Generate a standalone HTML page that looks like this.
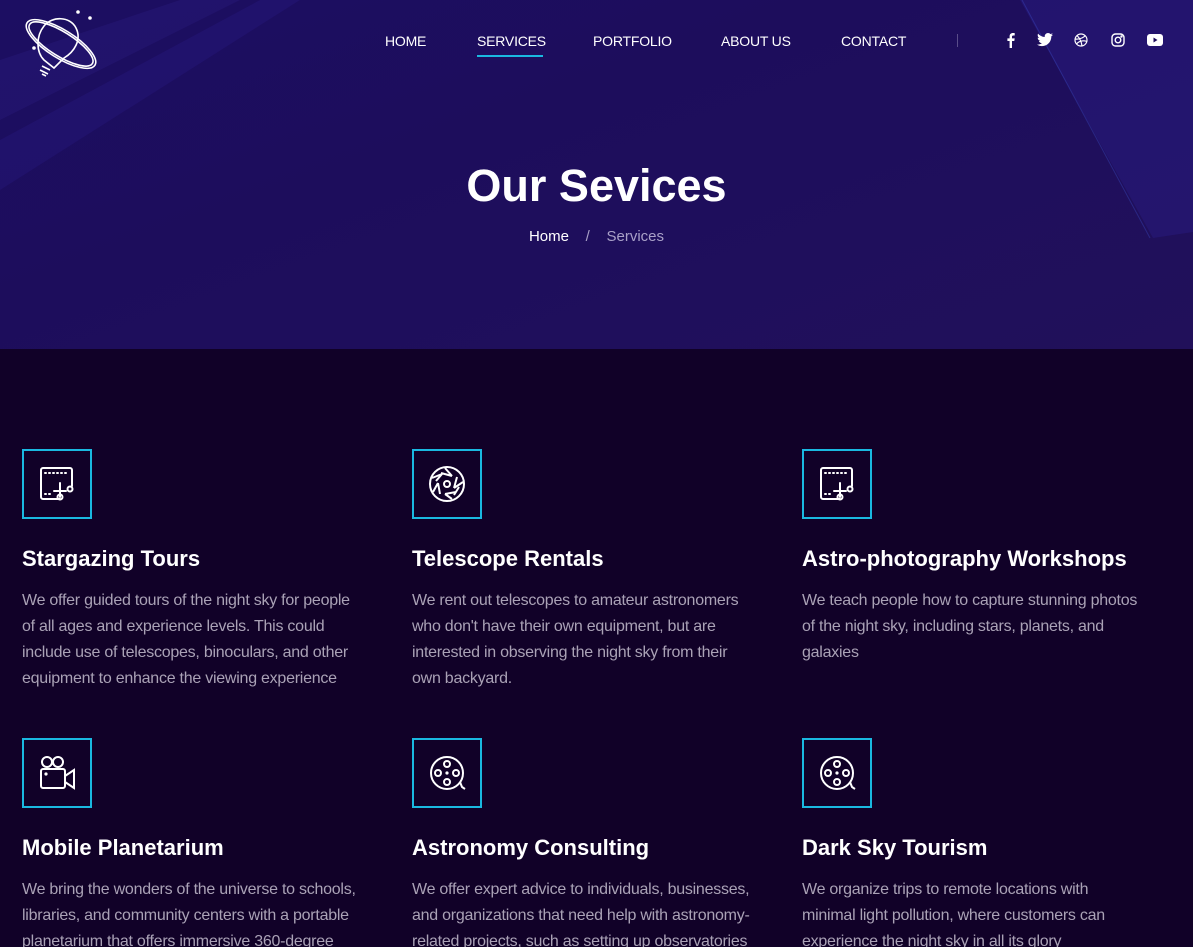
<!DOCTYPE html>
<html><head><meta charset="utf-8"><style>
*{margin:0;padding:0;box-sizing:border-box}
html,body{width:1193px;height:947px;overflow:hidden}
body{background:#110128;font-family:"Liberation Sans",sans-serif;position:relative}
.hero{position:absolute;left:0;top:0;width:1193px;height:349px;background:linear-gradient(160deg,#1c0e62 0%,#1d0d5c 40%,#1f0f5c 70%,#21105a 100%);overflow:hidden}
.nav a{position:absolute;top:33px;color:#fff;font-size:14px;text-decoration:none;letter-spacing:-0.2px}
.sep{position:absolute;left:957px;top:34px;width:1px;height:13px;background:#5a4d8a}
.soc{position:absolute;top:32px}
h1{position:absolute;top:160px;left:0;width:1193px;text-align:center;color:#fff;font-size:45px;font-weight:bold;letter-spacing:0}
.bc{position:absolute;top:228px;left:0;width:1193px;text-align:center;color:#fff;font-size:15px}
.bc span{color:#a9a0c8}
.card{position:absolute;width:380px}
.ib{width:70px;height:70px;border:2px solid #1ab8e0;display:flex;align-items:center;justify-content:center}
.card h3{color:#fff;font-size:22px;font-weight:bold;margin-top:27px;line-height:26px}
.card p{color:#aaa2b6;font-size:16px;letter-spacing:-0.25px;line-height:26px;margin-top:16px;white-space:nowrap}
</style></head><body>
<div class="hero">
<svg width="1193" height="349" style="position:absolute;left:0;top:0">
<polygon points="0,60 180,0 240,0 0,120" fill="#2a1c82" opacity="0.35"/>
<polygon points="0,140 260,0 300,0 0,190" fill="#2d2090" opacity="0.25"/>
<polygon points="1020,0 1193,0 1193,232 1153,238" fill="#2a1d8a" opacity="0.4"/>
<line x1="1022" y1="0" x2="1150" y2="238" stroke="#3a4ac0" stroke-width="1" opacity="0.4"/>
</svg>
<svg width="80" height="75" viewBox="0 0 80 75" style="position:absolute;left:22px;top:8px" fill="none" stroke="#fff" stroke-width="1.6">
<ellipse cx="39" cy="36" rx="40" ry="14" transform="rotate(32 39 36)"/>
<ellipse cx="39" cy="36" rx="37" ry="12" transform="rotate(32 39 36)"/>
<path d="M22 52 C14 44 14 28 22 18 C30 8 48 8 54 20 C60 32 52 44 42 50 L32 60 Z"/>
<path d="M20 58 L28 62 M18 62 L26 66 M20 66 L24 68"/>
<circle cx="56" cy="4" r="1" fill="#fff"/><circle cx="68" cy="10" r="1" fill="#fff"/><circle cx="12" cy="40" r="1" fill="#fff"/>
</svg>
<div class="nav">
<a style="left:385px">HOME</a>
<a style="left:477px">SERVICES</a>
<div style="position:absolute;left:477px;top:55px;width:66px;height:2px;background:#1ab8e0"></div>
<a style="left:593px">PORTFOLIO</a>
<a style="left:721px">ABOUT US</a>
<a style="left:841px">CONTACT</a>
</div>
<div class="sep"></div>
<svg class="soc" style="left:1004px" width="14" height="16" viewBox="0 0 14 16"><path d="M8 16V9h2.3l.4-2.6H8V4.8c0-.8.3-1.3 1.3-1.3h1.4V1.1C10.3 1 9.6 1 8.9 1 7 1 5.6 2.1 5.6 4.3v2.1H3.4V9h2.2v7z" fill="#fff"/></svg>
<svg class="soc" style="left:1037px;top:33px" width="16" height="14" viewBox="0 0 16 14"><path d="M16 1.6c-.6.3-1.2.4-1.9.5.7-.4 1.2-1 1.4-1.8-.6.4-1.3.6-2.1.8C12.8.4 12 0 11 0 9.2 0 7.7 1.5 7.7 3.3c0 .3 0 .5.1.7C5.1 3.9 2.7 2.6 1.1.6.8 1.1.7 1.6.7 2.3c0 1.1.6 2.1 1.5 2.7-.5 0-1-.2-1.5-.4 0 1.6 1.1 2.9 2.6 3.2-.5.2-1 .2-1.5.1.4 1.3 1.6 2.3 3.1 2.3C3.7 11.1 2 11.6.8 11.6H0c1.5.9 3.2 1.5 5 1.5 6 0 9.3-5 9.3-9.3v-.4c.7-.5 1.2-1.1 1.7-1.8z" fill="#fff"/></svg>
<svg class="soc" style="left:1074px;top:33px" width="14" height="14" viewBox="0 0 14 14" fill="none" stroke="#fff" stroke-width="1.2"><circle cx="7" cy="7" r="6"/><path d="M3 2.5c3 3 4.5 6 5 10.5M1 6c4 .5 8-1 10.5-3.5M2.5 11C5 8 9 7 13 8.5"/></svg>
<svg class="soc" style="left:1111px;top:33px" width="14" height="14" viewBox="0 0 14 14" fill="none" stroke="#fff" stroke-width="1.4"><rect x="1" y="1" width="12" height="12" rx="3.5"/><circle cx="7" cy="7" r="2.8"/><circle cx="10.5" cy="3.5" r=".5" fill="#fff"/></svg>
<svg class="soc" style="left:1147px;top:34px" width="16" height="12" viewBox="0 0 16 12"><rect width="16" height="12" rx="3" fill="#fff"/><path d="M6.5 3.5v5l4-2.5z" fill="#1d0d5c"/></svg>
<h1>Our Sevices</h1>
<div class="bc">Home &nbsp;&nbsp;&nbsp;<span>/</span>&nbsp;&nbsp;&nbsp; <span>Services</span></div>
</div>

<div class="card" style="left:22px;top:449px"><div class="ib"><svg width="38" height="38" viewBox="0 0 38 38" fill="none" stroke="#fff" stroke-width="2" stroke-linecap="round"><path d="M22 34H5a2 2 0 0 1-2-2V5a2 2 0 0 1 2-2h27a2 2 0 0 1 2 2v16"/><path d="M7 8h1M11 8h1M15 8h1M19 8h1M23 8h1M27 8h1M7 29h1M11 29h1"/><path d="M22 18v14M16 26h12"/><circle cx="22" cy="32" r="2.5"/><circle cx="32" cy="24" r="2.5"/></svg></div><h3>Stargazing Tours</h3><p>We offer guided tours of the night sky for people<br>of all ages and experience levels. This could<br>include use of telescopes, binoculars, and other<br>equipment to enhance the viewing experience</p></div>

<div class="card" style="left:412px;top:449px"><div class="ib"><svg width="38" height="38" viewBox="0 0 38 38" fill="none" stroke="#fff" stroke-width="2"><circle cx="19" cy="19" r="17"/><circle cx="19" cy="19" r="3"/><path d="M13 8l11 3M29 12l-3 11M28 27l-11 2M12 29l-2-11M8 16l6-7M26 30l5-8M17 3l7 8M35 17l-9 6M24 34l-7-5M5 27l5-9M4 13l10-4"/></svg></div><h3>Telescope Rentals</h3><p>We rent out telescopes to amateur astronomers<br>who don't have their own equipment, but are<br>interested in observing the night sky from their<br>own backyard.</p></div>

<div class="card" style="left:802px;top:449px"><div class="ib"><svg width="38" height="38" viewBox="0 0 38 38" fill="none" stroke="#fff" stroke-width="2" stroke-linecap="round"><path d="M22 34H5a2 2 0 0 1-2-2V5a2 2 0 0 1 2-2h27a2 2 0 0 1 2 2v16"/><path d="M7 8h1M11 8h1M15 8h1M19 8h1M23 8h1M27 8h1M7 29h1M11 29h1"/><path d="M22 18v14M16 26h12"/><circle cx="22" cy="32" r="2.5"/><circle cx="32" cy="24" r="2.5"/></svg></div><h3>Astro-photography Workshops</h3><p>We teach people how to capture stunning photos<br>of the night sky, including stars, planets, and<br>galaxies</p></div>

<div class="card" style="left:22px;top:738px"><div class="ib"><svg width="38" height="38" viewBox="0 0 38 38" fill="none" stroke="#fff" stroke-width="2"><circle cx="9" cy="8" r="5"/><circle cx="20" cy="8" r="5"/><rect x="3" y="15" width="24" height="19" rx="2"/><path d="M27 22l9-6v18l-9-6"/><circle cx="8" cy="20" r=".6" fill="#fff"/></svg></div><h3>Mobile Planetarium</h3><p>We bring the wonders of the universe to schools,<br>libraries, and community centers with a portable<br>planetarium that offers immersive 360-degree</p></div>

<div class="card" style="left:412px;top:738px"><div class="ib"><svg width="38" height="38" viewBox="0 0 38 38" fill="none" stroke="#fff" stroke-width="2"><path d="M32 28l2 5 3 2"/><circle cx="19" cy="19" r="16"/><circle cx="19" cy="10" r="3"/><circle cx="19" cy="28" r="3"/><circle cx="10" cy="19" r="3"/><circle cx="28" cy="19" r="3"/><circle cx="19" cy="19" r=".6" fill="#fff"/></svg></div><h3>Astronomy Consulting</h3><p>We offer expert advice to individuals, businesses,<br>and organizations that need help with astronomy-<br>related projects, such as setting up observatories</p></div>

<div class="card" style="left:802px;top:738px"><div class="ib"><svg width="38" height="38" viewBox="0 0 38 38" fill="none" stroke="#fff" stroke-width="2"><path d="M32 28l2 5 3 2"/><circle cx="19" cy="19" r="16"/><circle cx="19" cy="10" r="3"/><circle cx="19" cy="28" r="3"/><circle cx="10" cy="19" r="3"/><circle cx="28" cy="19" r="3"/><circle cx="19" cy="19" r=".6" fill="#fff"/></svg></div><h3>Dark Sky Tourism</h3><p>We organize trips to remote locations with<br>minimal light pollution, where customers can<br>experience the night sky in all its glory</p></div>
</body></html>
